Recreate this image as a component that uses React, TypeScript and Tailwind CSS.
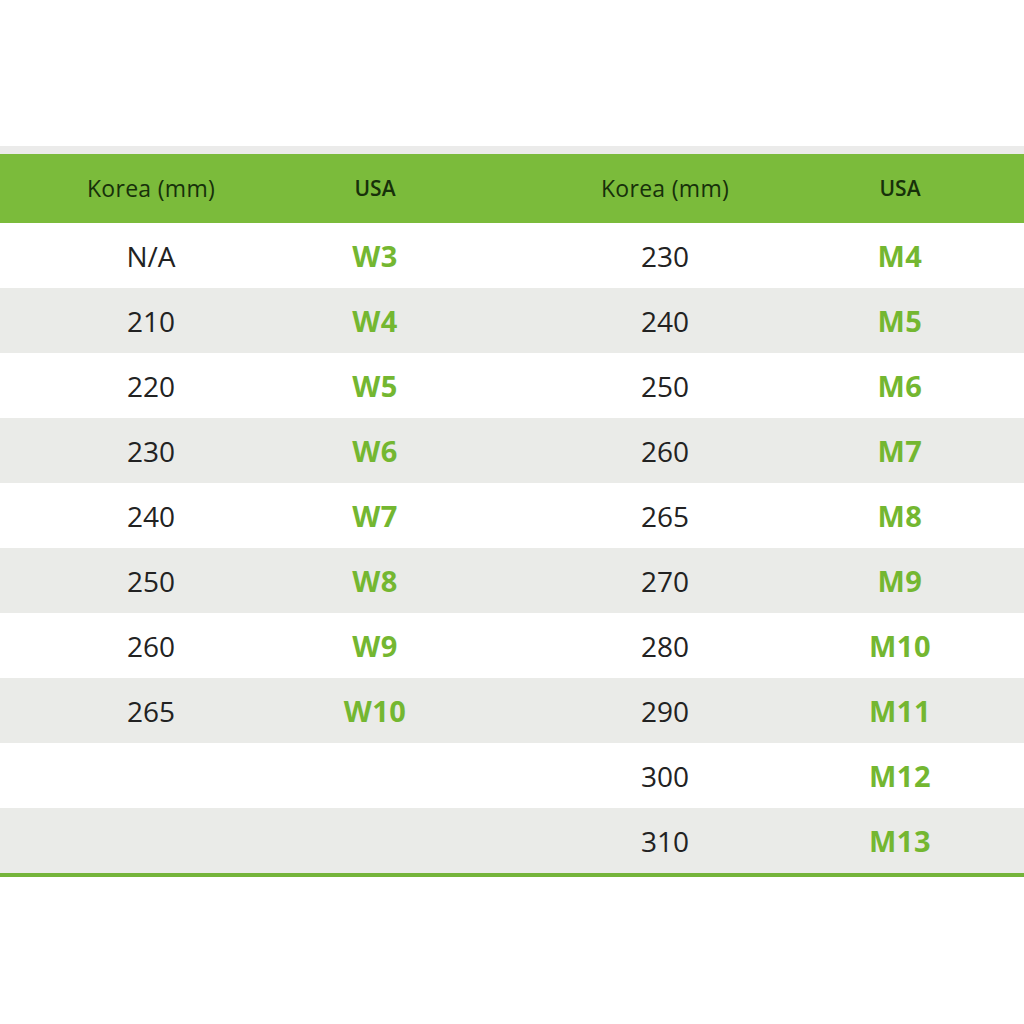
const rows: [string, string, string, string][] = [
  ["N/A", "W3", "230", "M4"],
  ["210", "W4", "240", "M5"],
  ["220", "W5", "250", "M6"],
  ["230", "W6", "260", "M7"],
  ["240", "W7", "265", "M8"],
  ["250", "W8", "270", "M9"],
  ["260", "W9", "280", "M10"],
  ["265", "W10", "290", "M11"],
  ["", "", "300", "M12"],
  ["", "", "310", "M13"],
];

const gridCols = "grid grid-cols-[302px_146px_370px_164px] items-center";

const App = () => (
  <div className="min-h-screen w-[1024px] bg-white pt-[146px] font-['Open_Sans',sans-serif]">
    <div className="h-[8px] bg-[#ebebea]" />
    <div className={`${gridCols} h-[69px] bg-[#7bbb3b] text-[#17300a]`}>
      <p className="text-center text-[23px] font-medium tracking-[0.3px]">Korea (mm)</p>
      <p className="text-center text-[21px] font-semibold">USA</p>
      <p className="pl-[64px] text-center text-[23px] font-medium tracking-[0.3px]">Korea (mm)</p>
      <p className="text-center text-[21px] font-semibold">USA</p>
    </div>
    <div>
      {rows.map((row, i) => (
        <div
          key={i}
          className={`${gridCols} h-[65px] ${i % 2 === 1 ? "bg-[#eaebe8]" : "bg-white"}`}
        >
          <p className="text-center text-[28px] text-[#222]">{row[0]}</p>
          <p className="pt-px text-center text-[29px] font-bold tracking-[0.5px] text-[#74b731]">{row[1]}</p>
          <p className="pl-[64px] text-center text-[28px] text-[#222]">{row[2]}</p>
          <p className="pt-px text-center text-[29px] font-bold tracking-[0.5px] text-[#74b731]">{row[3]}</p>
        </div>
      ))}
    </div>
    <div className="h-[4px] bg-[#74b43a]" />
  </div>
);

export default App;
